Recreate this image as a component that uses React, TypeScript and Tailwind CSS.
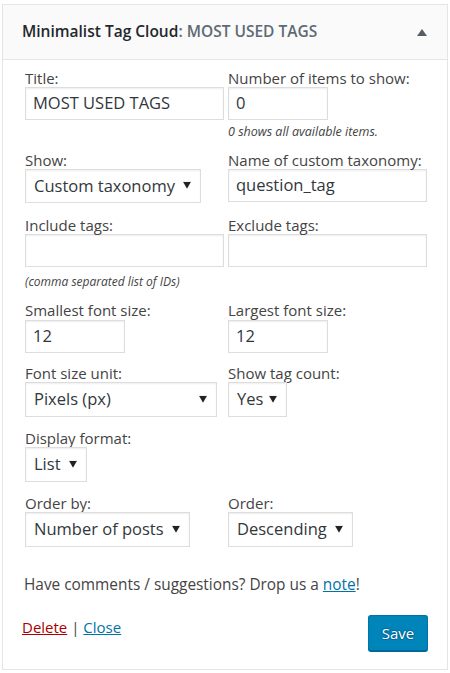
import type { ReactNode } from "react"

const font = { fontFamily: '"Open Sans", "Noto Sans", "Liberation Sans", sans-serif' }

function Caret() {
  return (
    <svg width="8" height="7" viewBox="0 0 8 7" className="absolute right-[9px] top-1/2 -translate-y-[60%]">
      <path d="M0 0 H8 L4 7 Z" fill="#222" />
    </svg>
  )
}

function Select({ value, className }: { value: string; className: string }) {
  return (
    <div
      className={`relative flex items-center h-full border border-[#dddddd] bg-white pl-[8px] text-[16.5px] text-[#32373c] shadow-[inset_0_1px_2px_rgba(0,0,0,0.07)] ${className}`}
    >
      <span>{value}</span>
      <Caret />
    </div>
  )
}

function Input({ value = "", className }: { value?: string; className: string }) {
  return (
    <div
      className={`flex items-center border border-[#dddddd] bg-white pl-[7px] text-[16.5px] text-[#32373c] shadow-[inset_0_1px_2px_rgba(0,0,0,0.07)] ${className}`}
    >
      {value}
    </div>
  )
}

function Label({ children }: { children: ReactNode }) {
  return <div className="h-[18px] leading-[18px] text-[15px] text-[#444]">{children}</div>
}

export default function App() {
  return (
    <div className="bg-white w-[450px] h-[673px] pt-[4px] px-[2px]" style={font}>
      <div className="border border-[#e5e5e5] h-[666px] flex flex-col">
        {/* header */}
        <div className="h-[55px] bg-[#fafafa] border-b border-[#e5e5e5] flex items-center justify-between pl-[19px] pr-[20px]">
          <h3 className="text-[15.5px] font-semibold text-[#23282d]">
            Minimalist Tag Cloud<span className="text-[#606a73] font-semibold">: MOST USED TAGS</span>
          </h3>
          <svg width="10" height="7" viewBox="0 0 10 7">
            <path d="M0 7 L5 0 L10 7 Z" fill="#555d66" />
          </svg>
        </div>

        <div className="pl-[22px] pr-[19px] text-[#444]">
          {/* row 1 */}
          <div className="grid grid-cols-[199px_199px] gap-x-[4px] mt-[9px]">
            <div>
              <Label>Title:</Label>
              <Input value="MOST USED TAGS" className="h-[33px] w-[199px]" />
            </div>
            <div>
              <Label>Number of items to show:</Label>
              <Input value="0" className="h-[33px] w-[100px]" />
              <div className="mt-[3px] h-[18px] leading-[18px] text-[12.5px] italic text-[#444]">
                0 shows all available items.
              </div>
            </div>
          </div>

          {/* row 2 */}
          <div className="grid grid-cols-[199px_199px] gap-x-[4px] mt-[10px]">
            <div>
              <Label>Show:</Label>
              <div className="h-[34px]">
                <Select value="Custom taxonomy" className="w-[176px]" />
              </div>
            </div>
            <div>
              <Label>Name of custom taxonomy:</Label>
              <Input value="question_tag" className="h-[33px] w-[199px]" />
            </div>
          </div>

          {/* row 3 */}
          <div className="grid grid-cols-[199px_199px] gap-x-[4px] mt-[13px]">
            <div>
              <Label>Include tags:</Label>
              <Input className="h-[33px] w-[199px]" />
            </div>
            <div>
              <Label>Exclude tags:</Label>
              <Input className="h-[33px] w-[199px]" />
            </div>
          </div>
          <div className="mt-[6px] h-[18px] leading-[18px] text-[12px] italic text-[#444]">
            (comma separated list of IDs)
          </div>

          {/* row 4 */}
          <div className="grid grid-cols-[199px_199px] gap-x-[4px] mt-[10px]">
            <div>
              <Label>Smallest font size:</Label>
              <Input value="12" className="h-[33px] w-[100px] mt-[1px]" />
            </div>
            <div>
              <Label>Largest font size:</Label>
              <Input value="12" className="h-[33px] w-[100px] mt-[1px]" />
            </div>
          </div>

          {/* row 5 */}
          <div className="grid grid-cols-[199px_199px] gap-x-[4px] mt-[11px]">
            <div>
              <Label>Font size unit:</Label>
              <div className="h-[35px]">
                <Select value="Pixels (px)" className="w-[192px]" />
              </div>
            </div>
            <div>
              <Label>Show tag count:</Label>
              <div className="h-[35px]">
                <Select value="Yes" className="w-[59px]" />
              </div>
            </div>
          </div>

          {/* row 6 */}
          <div className="mt-[12px]">
            <Label>Display format:</Label>
            <div className="h-[35px]">
              <Select value="List" className="w-[62px]" />
            </div>
          </div>

          {/* row 7 */}
          <div className="grid grid-cols-[199px_199px] gap-x-[4px] mt-[12px]">
            <div>
              <Label>Order by:</Label>
              <div className="h-[35px]">
                <Select value="Number of posts" className="w-[165px]" />
              </div>
            </div>
            <div>
              <Label>Order:</Label>
              <div className="h-[35px]">
                <Select value="Descending" className="w-[125px]" />
              </div>
            </div>
          </div>

          <p className="mt-[28px] -ml-[1px] text-[15.4px] leading-[20px] text-[#444]">
            Have comments / suggestions? Drop us a{" "}
            <a href="#" className="text-[#0073aa] underline">
              note
            </a>
            !
          </p>

          <div className="flex items-start justify-between mt-[20px] -ml-[3px]">
            <div className="text-[15px] leading-[20px] mt-[2px] text-[#444]">
              <a href="#" className="text-[#a00] underline">
                Delete
              </a>{" "}
              |{" "}
              <a href="#" className="text-[#0073aa] underline">
                Close
              </a>
            </div>
            <button
              type="button"
              className="h-[36px] w-[60px] rounded-[3px] bg-[#0085ba] border border-[#0073aa] border-b-[#006799] text-white text-[15px] shadow-[0_1px_0_#006799] [text-shadow:0_-1px_1px_#006799,1px_0_1px_#006799,0_1px_1px_#006799,-1px_0_1px_#006799]"
            >
              Save
            </button>
          </div>
        </div>
      </div>
    </div>
  )
}
